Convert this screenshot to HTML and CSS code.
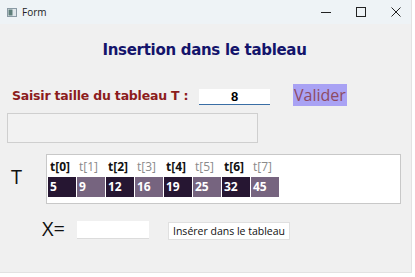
FILE: index.html
```html
<!DOCTYPE html>
<html lang="fr">
<head>
    <meta charset="UTF-8">
    <title>Form</title>
    <link rel="stylesheet" href="styles.css">
</head>
<body>
    <div class="window">
        <div class="titlebar">
            <svg class="app-icon" width="10" height="9" viewBox="0 0 10 9">
                <rect x="0.5" y="0.5" width="9" height="8" fill="#dfe6ea" stroke="#8a9aa4"/>
                <rect x="1.5" y="1.5" width="4" height="6" fill="#5f7f7a"/>
            </svg>
            <span class="title">Form</span>
            <div class="controls">
                <svg width="10" height="10" viewBox="0 0 10 10"><path d="M0 5.5h10" stroke="#222" stroke-width="1"/></svg>
                <svg width="10" height="10" viewBox="0 0 10 10"><rect x="0.5" y="0.5" width="9" height="9" fill="none" stroke="#222"/></svg>
                <svg width="10" height="10" viewBox="0 0 10 10"><path d="M0.5 0.5l9 9M9.5 0.5l-9 9" stroke="#222"/></svg>
            </div>
        </div>

        <div class="form">
            <h1>Insertion dans le tableau</h1>

            <div class="size-row">
                <label class="size-label">Saisir taille du tableau T :</label>
                <div class="size-input">8</div>
                <button class="btn-valider">Valider</button>
            </div>

            <div class="message"></div>

            <div class="table-row">
                <span class="big-label">T</span>
                <div class="panel">
                    <div class="cells">
                        <div class="cell"><div class="head">t[0]</div><div class="val dark">5</div></div>
                        <div class="cell"><div class="head odd">t[1]</div><div class="val light">9</div></div>
                        <div class="cell"><div class="head">t[2]</div><div class="val dark">12</div></div>
                        <div class="cell"><div class="head odd">t[3]</div><div class="val light">16</div></div>
                        <div class="cell"><div class="head">t[4]</div><div class="val dark">19</div></div>
                        <div class="cell"><div class="head odd">t[5]</div><div class="val light">25</div></div>
                        <div class="cell"><div class="head">t[6]</div><div class="val dark">32</div></div>
                        <div class="cell"><div class="head odd">t[7]</div><div class="val light">45</div></div>
                    </div>
                </div>
            </div>

            <div class="insert-row">
                <span class="big-label">X=</span>
                <div class="x-input"></div>
                <button class="btn-insert">Insérer dans le tableau</button>
            </div>
        </div>
    </div>
</body>
</html>
```

FILE: styles.css
```css
body {
    margin: 0;
    padding: 0;
    background-color: #ffffff;
    font-family: "Open Sans", Arial, sans-serif;
}

.window {
    width: 412px;
    height: 273px;
    background-color: #f0f0f0;
    border-right: 1px solid #e2e2e2;
    border-bottom: 1px solid #e2e2e2;
    box-sizing: border-box;
}

.titlebar {
    height: 24px;
    background-color: #eef3f6;
    display: flex;
    align-items: center;
    padding-left: 7px;
}

.app-icon {
    margin-right: 5px;
}

.title {
    font-family: "Segoe UI", "Open Sans", sans-serif;
    font-size: 10px;
    color: #222;
}

.controls {
    margin-left: auto;
    display: flex;
    gap: 25px;
    padding-right: 10px;
}

.form {
    padding: 0 0 0 7px;
}

h1 {
    margin: 17px 0 0 0;
    text-align: center;
    font-family: Tahoma, "DejaVu Sans", sans-serif;
    font-size: 15px;
    font-weight: bold;
    color: #14146b;
    letter-spacing: -0.3px;
    width: 395px;
}

.size-row {
    display: flex;
    align-items: center;
    margin-top: 25px;
    height: 22px;
}

.size-label {
    font-family: Tahoma, "DejaVu Sans", sans-serif;
    font-weight: bold;
    font-size: 12.5px;
    color: #8c1c1c;
    margin-left: 5px;
    letter-spacing: -0.2px;
    width: 187px;
}

.size-input {
    width: 71px;
    height: 15px;
    background: #fff;
    border-bottom: 1px solid #3a6ea5;
    text-align: center;
    font-family: "Liberation Sans", Arial, sans-serif;
    font-weight: bold;
    font-size: 13px;
    line-height: 16px;
    margin-top: 4px;
}

.btn-valider {
    margin-left: 23px;
    background-color: #a9a2f4;
    border: none;
    color: #8e4a62;
    font-family: "Open Sans", Arial, sans-serif;
    font-size: 16px;
    padding: 0 1px;
    height: 22px;
    line-height: 22px;
}

.message {
    width: 251px;
    height: 30px;
    margin-top: 7px;
    border: 1px solid #cfcfcf;
    background-color: #f2f2f2;
    box-sizing: border-box;
}

.table-row {
    display: flex;
    margin-top: 11px;
}

.big-label {
    font-family: "Open Sans", Arial, sans-serif;
    font-size: 20px;
    color: #111;
}

.table-row .big-label {
    width: 35px;
    padding-left: 4px;
    padding-top: 9px;
}

.panel {
    width: 355px;
    height: 50px;
    background: #fff;
    border: 1px solid #c8c8c8;
    box-sizing: border-box;
    padding: 2px 0 0 1px;
}

.cells {
    display: flex;
    gap: 1px;
}

.cell {
    width: 28px;
}

.head {
    height: 20px;
    line-height: 20px;
    font-size: 12px;
    font-weight: bold;
    color: #111;
    padding-left: 2px;
}

.head.odd {
    font-weight: normal;
    color: #8a8a8a;
}

.val {
    height: 20px;
    line-height: 20px;
    font-size: 12px;
    font-weight: bold;
    color: #fff;
    padding-left: 2px;
}

.val.dark {
    background-color: #261632;
}

.val.light {
    background-color: #76647f;
}

.insert-row {
    display: flex;
    align-items: center;
    margin-top: 11px;
    padding-left: 35px;
}

.x-input {
    width: 72px;
    height: 17px;
    background: #fff;
    border-bottom: 1px solid #dcdcdc;
    margin-left: 12px;
    margin-top: 3px;
}

.btn-insert {
    margin-left: 19px;
    margin-top: 5px;
    background: #fff;
    border: 1px solid #e0e0e0;
    font-family: "Open Sans", Arial, sans-serif;
    font-size: 10.5px;
    color: #111;
    padding: 0 4px;
    height: 18px;
}
```
